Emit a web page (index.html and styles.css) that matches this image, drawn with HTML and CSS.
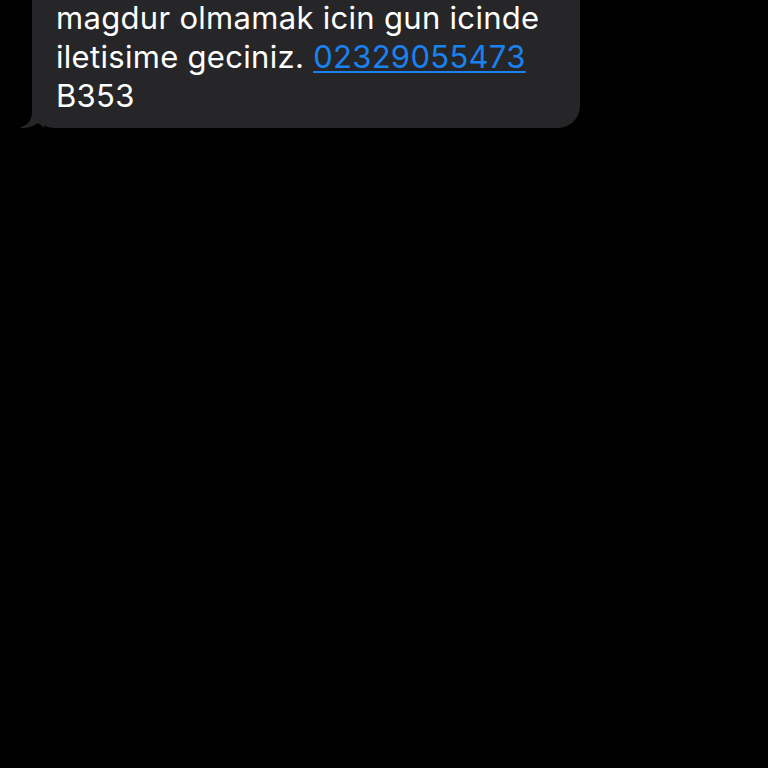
FILE: index.html
```html
<!DOCTYPE html>
<html>
<head>
<meta charset="utf-8">
<link rel="stylesheet" href="styles.css">
</head>
<body>
<div class="thread">
  <div class="bubble">
    <p class="msg">magdur olmamak icin gun icinde<br>iletisime geciniz. <a class="link" href="#">02329055473</a><br>B353</p>
    <svg class="tail" width="24" height="22" viewBox="0 0 24 22"><path d="M12 0 L12 6 C12 14 8 19 1 21 C0.5 21.2 0.5 22 1 22 C8 22 14 20 18 17 C20 18.5 22 20 24 22 L24 0 Z" fill="#262628"/></svg>
  </div>
</div>
</body>
</html>
```
FILE: styles.css
```css
html, body {
  margin: 0;
  padding: 0;
  background: #000;
  height: 100%;
}
.thread {
  display: flex;
  flex-direction: column;
  padding-left: 32px;
}
.bubble {
  position: relative;
  width: 524px;
  margin-top: -20px;
  padding: 18px 0 13px 24px;
  background: #262628;
  border-radius: 0 0 22px 22px;
}
.msg {
  margin: 0;
  font-family: Inter, "Liberation Sans", sans-serif;
  font-size: 31px;
  line-height: 39px;
  color: #fff;
  letter-spacing: 0.3px;
}
.link {
  color: #1a82f0;
  text-decoration: underline;
  text-decoration-thickness: 2px;
  text-underline-offset: 3px;
}
.tail {
  position: absolute;
  left: -12px;
  bottom: 0;
  display: block;
}
```
